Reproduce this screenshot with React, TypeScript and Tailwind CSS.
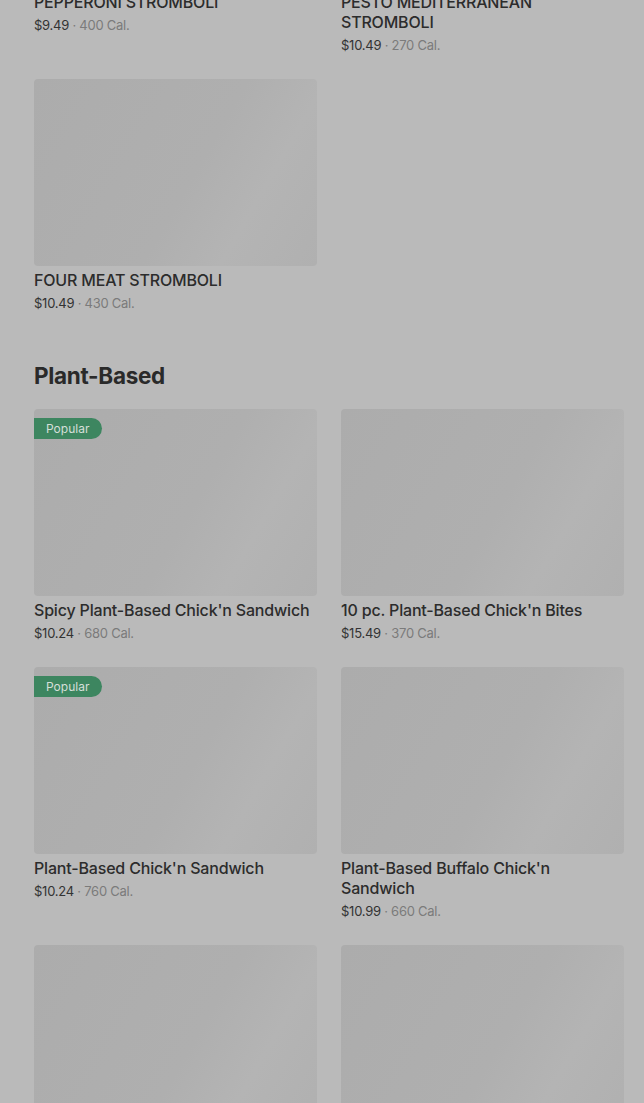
import React from "react";

type Item = { name: string; price: string; cal: string; popular?: boolean };

const stromboli: Item[] = [
  { name: "PEPPERONI STROMBOLI", price: "$9.49", cal: "400 Cal." },
  { name: "PESTO MEDITERRANEAN STROMBOLI", price: "$10.49", cal: "270 Cal." },
  { name: "FOUR MEAT STROMBOLI", price: "$10.49", cal: "430 Cal." },
];

const plant: Item[] = [
  { name: "Spicy Plant-Based Chick'n Sandwich", price: "$10.24", cal: "680 Cal.", popular: true },
  { name: "10 pc. Plant-Based Chick'n Bites", price: "$15.49", cal: "370 Cal." },
  { name: "Plant-Based Chick'n Sandwich", price: "$10.24", cal: "760 Cal.", popular: true },
  { name: "Plant-Based Buffalo Chick'n Sandwich", price: "$10.99", cal: "660 Cal." },
  { name: "", price: "", cal: "" },
  { name: "", price: "", cal: "" },
];

function Card({ item }: { item: Item }) {
  return (
    <div className="flex flex-col">
      <div className="relative h-[187px] w-full rounded-[4px] bg-[linear-gradient(120deg,#acacac_0%,#afafaf_55%,#b4b4b4_75%,#b0b0b0_100%)]">
        {item.popular && (
          <div className="absolute left-0 top-[9px] flex h-[21px] items-center rounded-r-full bg-[#3d8660] pl-[12px] pr-[13px] text-[12px] leading-none text-[#d5dfd9]">
            Popular
          </div>
        )}
      </div>
      {item.name && (
        <>
          <div className="mt-[4px] text-[16px] font-medium leading-[20px] tracking-[-0.18px] text-[#2c2c2c]">{item.name}</div>
          <div className="mt-[3px] text-[13px] leading-[20px] tracking-[-0.25px] text-[#333333]">
            {item.price}
            <span className="text-[#7b7b7b]"> · {item.cal}</span>
          </div>
        </>
      )}
    </div>
  );
}

export default function App() {
  return (
    <div className="h-[1103px] w-full overflow-hidden bg-[#bababa] font-['Inter','Liberation_Sans',sans-serif]">
      <div className="-mt-[199px] pl-[34px] pr-[20px]">
        <div className="grid grid-cols-2 gap-x-6 gap-y-6">
          {stromboli.map((it, i) => (
            <Card key={i} item={it} />
          ))}
        </div>
        <h2 className="mb-[17px] mt-[47px] text-[22.5px] font-bold leading-[32px] tracking-[-0.3px] text-[#2a2a2a]">
          Plant-Based
        </h2>
        <div className="grid grid-cols-2 gap-x-6 gap-y-6">
          {plant.map((it, i) => (
            <Card key={i} item={it} />
          ))}
        </div>
      </div>
    </div>
  );
}
